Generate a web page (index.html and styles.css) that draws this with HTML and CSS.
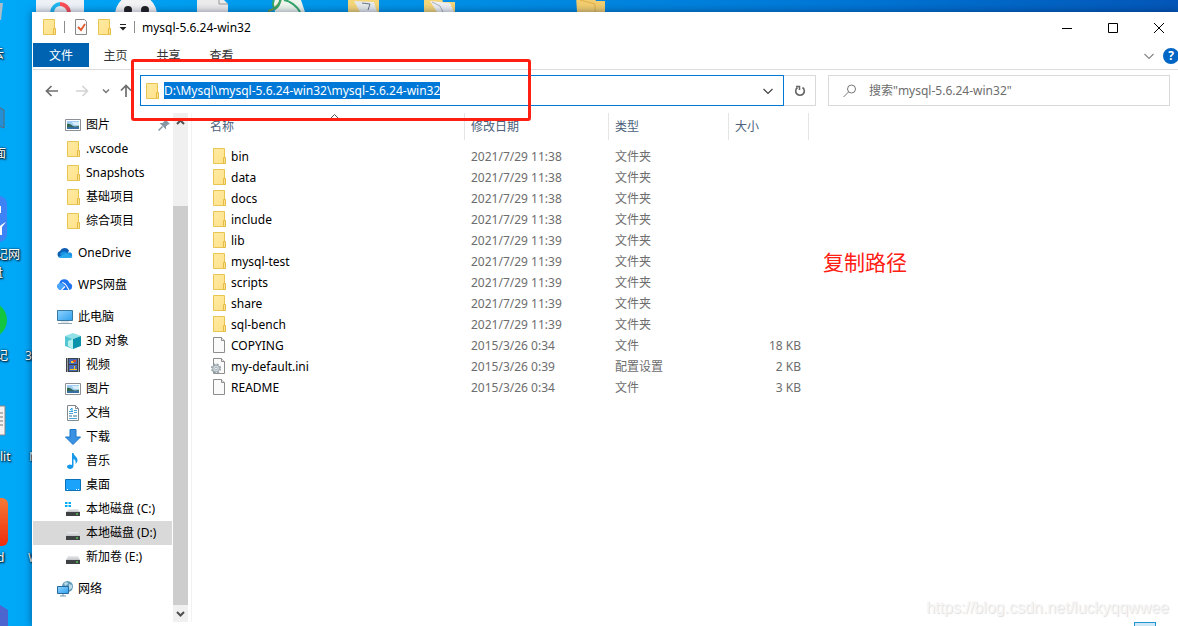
FILE: index.html
```html
<!DOCTYPE html>
<html lang="zh-CN">
<head>
<meta charset="utf-8">
<title>mysql-5.6.24-win32</title>
<link rel="stylesheet" href="styles.css">
</head>
<body>
<svg class="defs" aria-hidden="true">
  <defs>
    <linearGradient id="gFolder" x1="0" y1="0" x2="1" y2="1"><stop offset="0" stop-color="#ffeba3"/><stop offset="1" stop-color="#ffe18a"/></linearGradient>
    <linearGradient id="gScreen" x1="0" y1="0" x2="1" y2="1"><stop offset="0" stop-color="#8fd3ff"/><stop offset="1" stop-color="#2fa0ee"/></linearGradient>
    <linearGradient id="gDrive" x1="0" y1="0" x2="0" y2="1"><stop offset="0" stop-color="#eceded"/><stop offset="1" stop-color="#bfc3c8"/></linearGradient>
    <linearGradient id="gOrange" x1="0" y1="0" x2="0" y2="1"><stop offset="0" stop-color="#f47a35"/><stop offset="1" stop-color="#f02c0c"/></linearGradient>
    <symbol id="folder" viewBox="0 0 16 16"><path d="M2.500 .5h11v15h-11z" fill="url(#gFolder)" stroke="#e8c552"/><path d="M12.500 9.500h2v6h-2z" fill="#ffe391" stroke="#e3bb45"/></symbol>
    <symbol id="file" viewBox="0 0 16 16"><path d="M2.500 .5h8l3 3v12h-11z" fill="#fafafa" stroke="#8d8d8d"/><path d="M10.500 .5v3h3" fill="#e9e9e9" stroke="#8d8d8d"/></symbol>
    <symbol id="ini" viewBox="0 0 16 16"><path d="M2.500 .5h8l3 3v12h-11z" fill="#fafafa" stroke="#8d8d8d"/><path d="M10.500 .5v3h3" fill="#e9e9e9" stroke="#8d8d8d"/><circle cx="5" cy="10.500" r="4.300" fill="none" stroke="#93a0a8" stroke-width="1.500" stroke-dasharray="2 1.400"/><circle cx="5" cy="10.500" r="3.500" fill="#cfd6da" stroke="#9ba6ad"/><circle cx="5" cy="10.500" r="1.200" fill="#fff" stroke="#87939b" stroke-width=".6"/></symbol>
    <symbol id="picture" viewBox="0 0 16 16"><path d="M.5 2.500h15v11h-15z" fill="#fff" stroke="#8d9196"/><path d="M2 4h12v8H2z" fill="#9fcdf4"/><path d="M7 5h7v3H9z" fill="#d9edf9"/><path d="M2 7c3-1 4 1 6 2s4 0 6 0v1H2z" fill="#37664e"/><path d="M2 10h12v2H2z" fill="#366fa6"/></symbol>
    <symbol id="onedrive" viewBox="0 0 16 16"><path d="M3.500 12.500a3.300 3.300 0 0 1-.4-6.500A5 5 0 0 1 12 5.500L9 12z" fill="#0f5fb5"/><path d="M6 13 3 9c2-3 5-3 7-1l3-.8a3 3 0 0 1 0 5.800z" fill="#1793e5"/><path d="M1.500 12 9.500 8l6 4c-.5.700-1.500 1-2.500 1H4c-1 0-2-.3-2.500-1z" fill="#28a8ea"/></symbol>
    <symbol id="wps" viewBox="0 0 16 16"><path d="M3.500 13A3.500 3.500 0 0 1 2.300 6.300 5.200 5.200 0 0 1 12.400 6 3.600 3.600 0 0 1 12.500 13z" fill="#1f74f0"/><path d="M3.500 13A3.500 3.500 0 0 1 2.300 6.300C6 5.500 7.500 8 7 10L4.500 13z" fill="#4aa5ff"/><path d="M5.200 5.500C9 6 10 10 12 13M4.500 13 8 9.500" fill="none" stroke="#fff" stroke-width="1.100"/></symbol>
    <symbol id="pc" viewBox="0 0 16 16"><path d="M.5 1.500h15v10H.5z" fill="url(#gScreen)" stroke="#39789f"/><path d="M4 13h8" stroke="#c2ced6"/><path d="M1 14.500h14" stroke="#8fa3b2"/></symbol>
    <symbol id="cube" viewBox="0 0 16 16"><path d="m0 3 8-3 8 3-8 3z" fill="#90e2e7"/><path d="m0 3 8 3v10l-8-3z" fill="#52c7d3"/><path d="m16 3-8 3v10l8-3z" fill="#0b93ad"/><path d="m3 8 5-2v10l-5-3z" fill="#b6f0ef"/></symbol>
    <symbol id="video" viewBox="0 0 16 16"><path d="M1 1h14v14H1z" fill="#3d4147"/><path d="M2.500 1.500v14M13.500 1.500v14" stroke="#fff" stroke-dasharray="1 1"/><path d="M4 2h8v5H4zM4 8h8v6H4z" fill="#4669b9"/><path d="M6 4h3v2H6zM5 12h4V9h1v3h2v1H5z" fill="#f2c428"/><path d="M8 3h3v2H8z" fill="#d64b2b"/></symbol>
    <symbol id="doc" viewBox="0 0 16 16"><path d="M2.500 .5h8l3 3v12h-11z" fill="#fff" stroke="#828a91"/><path d="M10.500 .5v3h3" fill="none" stroke="#828a91"/><path d="M4 6.500h4M4 8.500h4M9 5.500h3M9 7.500h3M4 13.500h8" stroke="#47a4d9"/><path d="M4 11h3M8 11h4" stroke="#277096"/><path d="m5 5 2-2v4" fill="none" stroke="#219be0"/></symbol>
    <symbol id="download" viewBox="0 0 16 16"><path d="M5 .5h6V8h4.500L8 15.500.5 8H5z" fill="#3c92e2" stroke="#1877c7"/></symbol>
    <symbol id="music" viewBox="0 0 16 16"><path d="M7 0h1.500c.5 3 4 4 4 7 0 2-1 3-2 4 .6-2.500 0-4-2-5v7c0 2-2 3-3.500 3S2 15 2 13.500 5 10.500 7 12z" fill="#1698eb"/></symbol>
    <symbol id="desk" viewBox="0 0 16 16"><path d="M.5 2.500h15v11H.5z" fill="#1ba2fa" stroke="#0b72b9"/><path d="M2 12.500h1M11 12.500h1M13 12.500h1" stroke="#fff"/></symbol>
    <symbol id="drive" viewBox="0 0 16 16"><path d="M3 7h10l2 4H1z" fill="url(#gDrive)"/><path d="M1 11h14v4H1z" fill="#3f4245"/><path d="M11 12.500h2v1h-2z" fill="#54ff54"/></symbol>
    <symbol id="windrive" viewBox="0 0 16 16"><path d="M4 8h9l2 3H1z" fill="url(#gDrive)"/><path d="M1 11h14v4H1z" fill="#3f4245"/><path d="M11 12.500h2v1h-2z" fill="#54ff54"/><path d="M0 1h2.500v2H0zM3.500 1H6v2H3.500zM0 4h2.500v2H0zM3.500 4H6v2H3.500z" fill="#00adef"/></symbol>
    <symbol id="network" viewBox="0 0 16 16"><circle cx="10.500" cy="5.500" r="5.500" fill="#609bbb"/><path d="M7 2c2-1 4-1 4 1L8 5zM12 3l3 1v3l-3 2z" fill="#b9dae9"/><path d="M.5 5.500h11v7H.5z" fill="url(#gScreen)" stroke="#276b9c"/><path d="M3 15h6M6 13v2" stroke="#7296ac"/></symbol>
    <symbol id="chevron" viewBox="0 0 12 12"><path d="m1.500 4 4.500 4.500L10.500 4" fill="none" stroke="currentColor" stroke-width="1.200"/></symbol>
  </defs>
</svg>

<div class="desktop">
  <svg class="wallpaper-icons" width="1178" height="626" aria-hidden="true">
    <rect x="36" y="-30" width="48" height="46" rx="4" fill="#eef2f7"/><path d="M52 12a9 9 0 0 1 8-8" fill="none" stroke="#21b8f2" stroke-width="4"/><path d="M60 4a9 9 0 0 1 9 8" fill="none" stroke="#fc4e58" stroke-width="4"/>
    <circle cx="136" cy="15" r="21" fill="#f4f4f4"/><circle cx="128" cy="10" r="4" fill="#222"/><circle cx="145" cy="10" r="4" fill="#222"/>
    <path d="M197-5h22l9 9v10h-31z" fill="#ececec"/><path d="M219-1v5h9" fill="none" stroke="#999"/>
    <path d="M273 0h28l4 12h-30z" fill="#eef6ee"/><path d="M268 11c5-1 10-5 13-11" fill="none" stroke="#7a9a3a" stroke-width="2"/><path d="M274 0c-2 4-1 7 1 9 3-2 5-5 5-9M284 0c6 1 13 6 16 12" fill="none" stroke="#34a66c" stroke-width="2"/>
    <path d="M348-4h17l2 3h12v13h-31z" fill="#f5d679"/><path d="m354 1 20 1 3 10h-17z" fill="#e6eaec"/><path d="m362 3 8 1-2 6" fill="none" stroke="#667788"/>
    <path d="M424-4h17l2 6h12v10h-31z" fill="#f5d679"/><path d="m430 1 20 2 4 9h-17z" fill="#eef0f3"/><path d="m432 2 8 4 3 6" fill="none" stroke="#a9b0bc"/>
    <path d="M576-4h18l2 5h9v11h-28z" fill="#f3ce70"/><path d="m580 0 15 4v8" fill="none" stroke="#dfb04a"/>
    <path d="M-1 3h4L1 20h-2z" fill="#a9bdca"/><path d="M-1 107 4 110v18l-5-2z" fill="#258fd6" stroke="#566b7a"/>
    <rect x="-32" y="196" width="39" height="46" rx="8" fill="#3d83f5"/><path d="M0 206h1v7H0zM0 226c2-2 4-3 6-4l-4 5v8H0z" fill="#fff"/>
    <circle cx="-11" cy="320" r="18" fill="#13c53f"/>
    <path d="M-4 406h9v29h-9z" fill="#f1f1f1" stroke="#888"/><path d="M0 413h3M0 417h3M0 421h3M0 425h3" stroke="#777"/>
    <rect x="-30" y="498" width="38" height="48" rx="6" fill="url(#gOrange)"/><path d="m-5 602 13 8v16H-5z" fill="#4d65cf"/>
  </svg>
  <span class="desk-label l1">云</span>
  <span class="desk-label l2">面</span>
  <span class="desk-label l3">记网</span>
  <span class="desk-label l4">盘</span>
  <span class="desk-label l5">记</span>
  <span class="desk-label l6">3D</span>
  <span class="desk-label l7">lit</span>
  <span class="desk-label l8">N</span>
  <span class="desk-label l9">d</span>
  <span class="desk-label l10">W</span>

  <main class="window">
    <header class="titlebar">
      <div class="quick">
        <svg class="icon"><use href="#folder"/></svg>
        <i class="bar"></i>
        <button class="plain" aria-label="属性"><svg class="icon" viewBox="0 0 16 16"><path d="M2.500 .5h9l2 2v13h-11z" fill="#fafafa" stroke="#888"/><path d="m5 8 3 3 4-6" fill="none" stroke="#e4572a" stroke-width="1.800"/></svg></button>
        <button class="plain" aria-label="新建文件夹"><svg class="icon"><use href="#folder"/></svg></button>
        <button class="plain" aria-label="自定义快速访问工具栏"><svg width="8" height="8" viewBox="0 0 8 8"><path d="M1 1.500h6" stroke="#222"/><path d="M.5 4h7L4 7.500z" fill="#222"/></svg></button>
        <i class="bar"></i>
      </div>
      <h1>mysql-5.6.24-win32</h1>
      <div class="controls">
        <button class="plain" aria-label="最小化"><svg width="10" height="10"><path d="M0 5.500h10" stroke="#000"/></svg></button>
        <button class="plain" aria-label="最大化"><svg width="10" height="10"><path d="M.5 .5h9v9h-9z" fill="none" stroke="#000"/></svg></button>
        <button class="plain" aria-label="关闭"><svg width="10" height="10"><path d="m0 0 10 10M10 0 0 10" stroke="#000"/></svg></button>
      </div>
    </header>

    <div class="ribbon">
      <button class="tab file">文件</button>
      <button class="tab">主页</button>
      <button class="tab">共享</button>
      <button class="tab">查看</button>
      <button class="plain expand" aria-label="展开功能区"><svg class="chev"><use href="#chevron"/></svg></button>
      <button class="plain help" aria-label="帮助">?</button>
    </div>

    <div class="addressbar">
      <div class="history">
        <button class="plain" aria-label="后退"><svg width="14" height="12"><path d="M13 6H2M6.500 1 1.500 6l5 5" fill="none" stroke="#6d6d6d" stroke-width="1.700"/></svg></button>
        <button class="plain" aria-label="前进"><svg width="14" height="12"><path d="M1 6h11M7.500 1l5 5-5 5" fill="none" stroke="#d2d2d2" stroke-width="1.500"/></svg></button>
        <button class="plain recent" aria-label="最近浏览的位置"><svg width="8" height="8"><path d="m1 2.500 3 3 3-3" fill="none" stroke="#777" stroke-width="1.500"/></svg></button>
        <button class="plain" aria-label="上移"><svg width="12" height="14"><path d="M6 13V2M1 6.500l5-5 5 5" fill="none" stroke="#6d6d6d" stroke-width="1.700"/></svg></button>
      </div>
      <div class="path">
        <svg class="icon"><use href="#folder"/></svg>
        <input id="path" type="text" aria-label="地址" value="D:\Mysql\mysql-5.6.24-win32\mysql-5.6.24-win32" spellcheck="false">
        <button class="plain" aria-label="以前的位置"><svg class="chev"><use href="#chevron"/></svg></button>
      </div>
      <button class="refresh" aria-label="刷新"><svg width="12" height="12" viewBox="0 0 12 12"><path d="M8.500 2.500a4.300 4.300 0 1 1-5 0" fill="none" stroke="#666" stroke-width="1.600"/><path d="M2 1.500h3.500V5" fill="none" stroke="#666" stroke-width="1.500"/></svg></button>
      <div class="search">
        <svg width="14" height="14" viewBox="0 0 14 14"><circle cx="8.500" cy="5" r="4" fill="none" stroke="#777"/><path d="m5.500 8-5 5" stroke="#777"/></svg>
        <input type="search" aria-label="搜索" placeholder='搜索"mysql-5.6.24-win32"'>
      </div>
    </div>

    <div class="body">
      <nav class="tree" aria-label="导航窗格">
        <a class="sub" href="#"><svg class="icon"><use href="#picture"/></svg>图片<svg class="pin" width="12" height="12" viewBox="0 0 12 12"><path d="m7 0 5 5-2 .5-2 2v3L1.500 4h3l2-2z" fill="#8796a3"/><path d="m4.500 7.500-4 4" stroke="#8796a3" stroke-width="1.500"/></svg></a>
        <a class="sub" href="#"><svg class="icon"><use href="#folder"/></svg>.vscode</a>
        <a class="sub" href="#"><svg class="icon"><use href="#folder"/></svg>Snapshots</a>
        <a class="sub" href="#"><svg class="icon"><use href="#folder"/></svg>基础项目</a>
        <a class="sub" href="#"><svg class="icon"><use href="#folder"/></svg>综合项目</a>
        <a class="top" href="#"><svg class="icon"><use href="#onedrive"/></svg>OneDrive</a>
        <a class="top" href="#"><svg class="icon"><use href="#wps"/></svg>WPS网盘</a>
        <a class="top" href="#"><svg class="icon"><use href="#pc"/></svg>此电脑</a>
        <a class="sub" href="#"><svg class="icon"><use href="#cube"/></svg>3D 对象</a>
        <a class="sub" href="#"><svg class="icon"><use href="#video"/></svg>视频</a>
        <a class="sub" href="#"><svg class="icon"><use href="#picture"/></svg>图片</a>
        <a class="sub" href="#"><svg class="icon"><use href="#doc"/></svg>文档</a>
        <a class="sub" href="#"><svg class="icon"><use href="#download"/></svg>下载</a>
        <a class="sub" href="#"><svg class="icon"><use href="#music"/></svg>音乐</a>
        <a class="sub" href="#"><svg class="icon"><use href="#desk"/></svg>桌面</a>
        <a class="sub" href="#"><svg class="icon"><use href="#windrive"/></svg>本地磁盘 (C:)</a>
        <a class="sub current" href="#"><svg class="icon"><use href="#drive"/></svg>本地磁盘 (D:)</a>
        <a class="sub" href="#"><svg class="icon"><use href="#drive"/></svg>新加卷 (E:)</a>
        <a class="top" href="#"><svg class="icon"><use href="#network"/></svg>网络</a>
      </nav>
      <div class="scroll">
        <button class="plain" aria-label="向上滚动"><svg width="9" height="8"><path d="m1 6 3.500-3.500L8 6" fill="none" stroke="#505050" stroke-width="2"/></svg></button>
        <div class="track"><div class="thumb"></div></div>
        <button class="plain" aria-label="向下滚动"><svg width="9" height="8"><path d="m1 2 3.500 3.500L8 2" fill="none" stroke="#505050" stroke-width="2"/></svg></button>
      </div>
      <section class="files">
        <table>
          <colgroup><col class="c-name"><col class="c-date"><col class="c-type"><col class="c-size"><col></colgroup>
          <thead><tr><th class="sorted">名称<svg class="sort" width="9" height="6"><path d="m1 5 3.500-3.500L8 5" fill="none" stroke="#555"/></svg></th><th>修改日期</th><th>类型</th><th>大小</th><th class="rest"></th></tr></thead>
          <tbody>
            <tr><td><span class="name"><svg class="icon"><use href="#folder"/></svg>bin</span></td><td>2021/7/29 11:38</td><td>文件夹</td><td></td><td></td></tr>
            <tr><td><span class="name"><svg class="icon"><use href="#folder"/></svg>data</span></td><td>2021/7/29 11:38</td><td>文件夹</td><td></td><td></td></tr>
            <tr><td><span class="name"><svg class="icon"><use href="#folder"/></svg>docs</span></td><td>2021/7/29 11:38</td><td>文件夹</td><td></td><td></td></tr>
            <tr><td><span class="name"><svg class="icon"><use href="#folder"/></svg>include</span></td><td>2021/7/29 11:38</td><td>文件夹</td><td></td><td></td></tr>
            <tr><td><span class="name"><svg class="icon"><use href="#folder"/></svg>lib</span></td><td>2021/7/29 11:39</td><td>文件夹</td><td></td><td></td></tr>
            <tr><td><span class="name"><svg class="icon"><use href="#folder"/></svg>mysql-test</span></td><td>2021/7/29 11:39</td><td>文件夹</td><td></td><td></td></tr>
            <tr><td><span class="name"><svg class="icon"><use href="#folder"/></svg>scripts</span></td><td>2021/7/29 11:39</td><td>文件夹</td><td></td><td></td></tr>
            <tr><td><span class="name"><svg class="icon"><use href="#folder"/></svg>share</span></td><td>2021/7/29 11:39</td><td>文件夹</td><td></td><td></td></tr>
            <tr><td><span class="name"><svg class="icon"><use href="#folder"/></svg>sql-bench</span></td><td>2021/7/29 11:39</td><td>文件夹</td><td></td><td></td></tr>
            <tr><td><span class="name"><svg class="icon"><use href="#file"/></svg>COPYING</span></td><td>2015/3/26 0:34</td><td>文件</td><td>18 KB</td><td></td></tr>
            <tr><td><span class="name"><svg class="icon"><use href="#ini"/></svg>my-default.ini</span></td><td>2015/3/26 0:39</td><td>配置设置</td><td>2 KB</td><td></td></tr>
            <tr><td><span class="name"><svg class="icon"><use href="#file"/></svg>README</span></td><td>2015/3/26 0:34</td><td>文件</td><td>3 KB</td><td></td></tr>
          </tbody>
        </table>
      </section>
    </div>
    <footer class="status"><button class="view" aria-label="详细信息"></button></footer>
  </main>

  <div class="highlight"></div>
  <p class="note">复制路径</p>
  <p class="watermark">https://blog.csdn.net/luckyqqwwee</p>
</div>
<script src="main.js"></script>
</body>
</html>
```
FILE: main.js
```js
const path = document.getElementById('path');
path.focus();
path.select();
```
FILE: styles.css
```css
* { box-sizing: border-box; }
body {
  margin: 0;
  overflow: hidden;
  font: 12px/16px "Noto Sans", "Noto Sans CJK SC", sans-serif;
  color: #000;
}
button, input { font: inherit; color: inherit; }
.defs { position: absolute; width: 0; height: 0; }
.icon { width: 16px; height: 16px; flex: none; display: block; }
.chev { width: 12px; height: 12px; display: block; }
.plain {
  border: 0;
  padding: 0;
  background: none;
  display: flex;
  align-items: center;
  justify-content: center;
}

/* Desktop */
.desktop {
  position: relative;
  height: 100vh;
  padding: 12px 0 0 32px;
  overflow: hidden;
  background: linear-gradient(90deg, #00a8f8 0, #0099ec 300px, #0078d7 70%, #0457b8 100%);
}
.wallpaper-icons { position: absolute; left: 0; top: 0; }
.desk-label {
  position: absolute;
  color: #fff;
  white-space: nowrap;
  text-shadow: 1px 1px 2px #000, 0 0 2px #000;
}
.l1 { left: -8px; top: 46px; }
.l2 { left: -6px; top: 146px; }
.l3 { left: -4px; top: 247px; }
.l4 { left: -9px; top: 265px; }
.l5 { left: -4px; top: 348px; }
.l6 { left: 25px; top: 348px; }
.l7 { left: 0; top: 449px; }
.l8 { left: 29px; top: 449px; }
.l9 { left: -3px; top: 550px; }
.l10 { left: 28px; top: 550px; }

/* Window */
.window {
  position: relative;
  height: 100%;
  padding-left: 1px;
  display: flex;
  flex-direction: column;
  background: #fff;
  box-shadow: 0 0 8px rgba(0, 20, 60, .5);
}
.titlebar { display: flex; align-items: center; height: 31px; flex: none; }
.quick { display: flex; align-items: center; gap: 7px; padding: 0 0 1px 8px; }
.bar { width: 1px; height: 12px; background: #8c8c8c; }
.quick .bar:first-of-type { margin: 0 1px 0 0; }
h1 { margin: 0; padding-left: 7px; font-size: 12px; font-weight: 400; }
.controls { display: flex; margin: 0 -4px 0 auto; }
.controls .plain { width: 46px; height: 30px; }

.ribbon { display: flex; height: 27px; flex: none; border-bottom: 1px solid #dadbdc; }
.tab { width: 53px; height: 24px; padding: 1px 0 0; border: 0; background: none; color: #333; }
.tab.file { width: 56px; color: #fff; background: #0063b1; }
.expand { margin-left: auto; width: 28px; color: #888; }
.help {
  align-self: center;
  width: 16px;
  height: 16px;
  margin-right: -1px;
  border-radius: 50%;
  background: #0066c5;
  color: #fff;
  font-weight: 700;
}

.addressbar { display: flex; align-items: center; height: 43px; flex: none; padding: 0 8px 2px 0; }
.history { display: flex; align-items: center; width: 107px; flex: none; padding-left: 12px; gap: 16px; }
.history .recent { margin-right: -6px; margin-left: -3px; }
.path {
  display: flex;
  align-items: center;
  flex: 1;
  min-width: 0;
  height: 31px;
  padding: 0 4px 0 3px;
  border: 1px solid #0078d7;
}
.path input {
  flex: 1;
  min-width: 0;
  height: 20px;
  padding: 0;
  margin-left: 4px;
  border: 0;
  outline: 0;
  background: none;
}
.path input::selection { background: #0078d7; color: #fff; }
.path .plain { width: 22px; height: 28px; color: #444; }
.refresh {
  display: flex;
  align-items: center;
  justify-content: center;
  width: 32px;
  height: 31px;
  padding: 0;
  flex: none;
  background: #fff;
  border: 1px solid #d9d9d9;
  border-left: 0;
}
.search {
  display: flex;
  align-items: center;
  flex: 0 1 342px;
  height: 31px;
  margin-left: 12px;
  padding-left: 14px;
  border: 1px solid #d9d9d9;
}
.search input {
  flex: 1;
  min-width: 0;
  padding: 0;
  margin-left: 12px;
  border: 0;
  outline: 0;
  appearance: none;
  background: none;
}
.search input::placeholder { color: #6d6d6d; opacity: 1; }

.body { display: flex; flex: 1; min-height: 0; }
.tree { width: 139px; flex: none; overflow: hidden; }
.tree a {
  display: flex;
  align-items: center;
  gap: 5px;
  height: 24px;
  color: inherit;
  text-decoration: none;
  white-space: nowrap;
}
.tree .sub { padding-left: 32px; }
.tree .top { padding-left: 24px; margin-top: 8px; }
.tree .current { background: #d9d9d9; }
.pin { margin: 0 2px 0 auto; }
.scroll { display: flex; flex-direction: column; width: 15px; margin: 0 3px 0 1px; flex: none; background: #f0f0f0; }
.scroll .plain { height: 17px; flex: none; }
.track { flex: 1; display: flex; flex-direction: column; justify-content: flex-end; }
.thumb { height: 84%; background: #cdcdcd; }

.files { flex: 1; min-width: 0; border-left: 1px solid #f2f2f2; }
table { width: 100%; table-layout: fixed; border-collapse: separate; border-spacing: 0; }
.c-name { width: 273px; }
.c-date { width: 144px; }
.c-type { width: 120px; }
.c-size { width: 80px; }
th {
  height: 27px;
  padding: 0 0 0 6px;
  border-right: 1px solid #e5e5e5;
  font-weight: 400;
  text-align: left;
  color: #4c607a;
}
th.sorted { position: relative; padding-left: 18px; }
th.rest { border: 0; }
.sort { position: absolute; left: 138px; top: 0; }
tbody::before { content: ""; display: block; height: 6px; }
td { height: 21px; padding: 0 0 0 6px; color: #6d6d6d; white-space: nowrap; }
td:first-child { padding-left: 19px; color: #000; }
td:nth-child(4) { padding: 0 8px 0 0; text-align: right; }
.name { display: flex; align-items: center; gap: 4px; }
.name .icon { margin-bottom: 1px; }

.status { display: flex; justify-content: flex-end; height: 4px; flex: none; padding-right: 22px; overflow: hidden; }
.view { width: 22px; height: 16px; flex: none; padding: 0; border: 1px solid #2693d1; background: #cce8f7; }

/* Annotations over the window */
.highlight {
  position: absolute;
  left: 131px;
  top: 59px;
  width: 400px;
  height: 62px;
  border: 3px solid #ff2013;
  border-radius: 3px;
}
.note {
  position: absolute;
  left: 823px;
  top: 248px;
  margin: 0;
  font-size: 21px;
  line-height: 28px;
  color: #ff2013;
}
.watermark {
  position: absolute;
  right: 9px;
  bottom: 8px;
  margin: 0;
  font: 16px/20px "Liberation Sans", Arial, sans-serif;
  color: #f6f6f6;
  text-shadow: 1px 1px 1px #ddd;
}
```
